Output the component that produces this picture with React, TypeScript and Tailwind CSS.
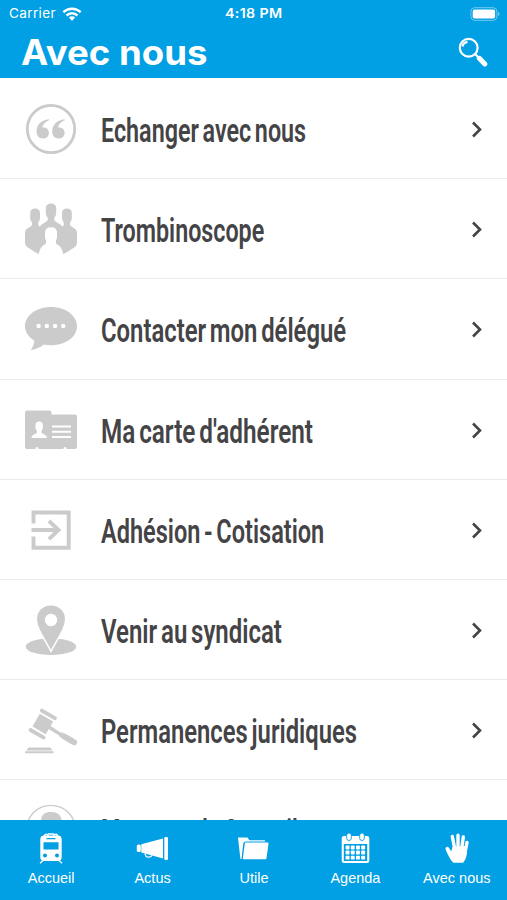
import { useLayoutEffect, useRef, useState, type ReactNode } from 'react';

type MenuItem = {
  label: string;
  width: number;
  icon: ReactNode;
};

type Tab = {
  label: string;
  icon: ReactNode;
};

// Condenses or widens a line of text so that it takes the given width
function FitText({ width, className, children }: { width: number; className?: string; children: string }) {
  const ref = useRef<HTMLSpanElement>(null);
  const [scale, setScale] = useState(1);

  useLayoutEffect(() => {
    if (ref.current) setScale(width / ref.current.offsetWidth);
  }, [width, children]);

  return (
    <span className="block" style={{ width }}>
      <span
        ref={ref}
        className={`inline-block origin-left whitespace-nowrap ${className ?? ''}`}
        style={{ transform: `scaleX(${scale})` }}
      >
        {children}
      </span>
    </span>
  );
}

function QuoteIcon() {
  return (
    <svg viewBox="0 0 52 52" className="size-[52px]" fill="currentColor">
      <circle cx="26" cy="26" r="23.700" fill="none" stroke="currentColor" strokeWidth="2.800" />
      <path d="M24 16.200C16 17 11.500 22 11.500 28.500c0 4.200 2.600 7 6.400 7 3.500 0 6-2.400 6-5.600s-2.300-5.400-5.200-5.400c-.7 0-1.200.1-1.500.2.700-3.400 3.200-6.200 6.800-7.500z" />
      <path d="M39.700 16.200C31.700 17 27.200 22 27.200 28.500c0 4.200 2.600 7 6.400 7 3.500 0 6-2.400 6-5.600s-2.300-5.400-5.200-5.400c-.7 0-1.200.1-1.500.2.700-3.400 3.200-6.200 6.800-7.500z" />
    </svg>
  );
}

function TeamIcon() {
  return (
    <svg viewBox="0 0 52 52" className="size-[52px]" fill="currentColor">
      <path d="M20.800 5c0-3 2-4.500 5.200-4.500S31.200 2 31.200 5v5c0 2-1.200 4-2 5v2c1 2.500 6 3 8.300 7L34 34H18l-3.500-10c2.300-4 7.300-4.500 8.300-7v-2c-.8-1-2-3-2-5z" />
      <path d="M5.200 10c0-3 1.800-4.500 4.900-4.500S15 7 15 10v5c0 2-1.200 3.500-1.800 4.500V22c.8 1.500 3.500 2 5.300 3l2.500 5v10.500c-3 2-6.300 4-7 10.500C10 49.500 7 47 3.500 45 1 43.500 0 42 0 39v-9.500C0 25 6 24.500 7 22v-2.500c-.6-1-1.800-2.500-1.800-4.500z" />
      <path d="M46.800 10c0-3-1.800-4.500-4.900-4.500S37 7 37 10v5c0 2 1.200 3.500 1.800 4.500V22c-.8 1.500-3.500 2-5.300 3L31 30v10.500c3 2 6.300 4 7 10.500 4-1.500 7-4 10.500-6 2.500-1.500 3.500-3 3.500-6v-9.500C52 25 46 24.500 45 22v-2.500c.6-1 1.800-2.500 1.800-4.500z" />
      <path
        d="M20 30c0-4 2-5.800 6-5.800s6 1.800 6 5.800v4c0 2-1 3.800-2.200 5v1.500C32.500 42.500 37 44 38 51.500H14c1-7.500 5.500-9 8.200-11V39c-1.200-1.200-2.200-3-2.200-5z"
        fill="white"
      />
    </svg>
  );
}

function BubbleIcon() {
  return (
    <svg viewBox="0 0 52 52" className="size-[52px]" fill="currentColor">
      <path d="M26 4C11.600 4 0 12.500 0 23.200c0 5.800 3.800 11 9.300 14.500-.3 3.500-1.600 6.500-3.500 9.500 5.200-1 9.700-2.800 13-5.700 2.300.4 4.700.7 7.200.7 14.400 0 26-8.300 26-19S40.400 4 26 4z" />
      <g fill="white">
        <circle cx="13.600" cy="23" r="2.200" />
        <circle cx="21.800" cy="23" r="2.200" />
        <circle cx="30" cy="23" r="2.200" />
        <circle cx="38.200" cy="23" r="2.200" />
      </g>
    </svg>
  );
}

function CardIcon() {
  return (
    <svg viewBox="0 0 52 52" className="size-[52px]" fill="currentColor">
      <path d="M2 6.500h22.500a2 2 0 0 1 2 2v2H50a2 2 0 0 1 2 2V43a2 2 0 0 1-2 2h-8.500c0-1.300-.6-2-1.500-2s-1.500.7-1.500 2h-25c0-1.300-.6-2-1.500-2s-1.500.7-1.500 2H2a2 2 0 0 1-2-2V8.500a2 2 0 0 1 2-2z" />
      <g fill="white">
        <path d="M10.500 21c0-2.200 1.400-3.500 3.700-3.500s3.700 1.300 3.700 3.500v2.500c0 1.500-.8 2.700-1.300 3.200v2c.8 1.500 5 1.500 5.600 5.300H6.400c.6-3.800 4.600-3.800 5.400-5.300v-2c-.5-.5-1.300-1.700-1.300-3.200z" />
        <path d="M27 21.500h19v2H27zM27 26.700h19v2H27zM27 31.900h19v2H27z" />
      </g>
    </svg>
  );
}

function EnterIcon() {
  return (
    <svg viewBox="0 0 52 52" className="size-[52px]" fill="none" stroke="currentColor" strokeWidth="3.900">
      <path d="M8.500 19.500V8.500h35.200v35.200H8.500V32.500" />
      <path d="M6.500 26h26M24 16.800l9.500 9.200-9.500 9.200" />
    </svg>
  );
}

function PlaceIcon() {
  return (
    <svg viewBox="0 0 52 52" className="size-[52px]" fill="currentColor">
      <ellipse cx="26" cy="42.700" rx="25.200" ry="8.300" />
      <path
        d="M26 .7c8.300 0 14.700 6.200 14.700 14.300 0 8.500-7 18-14.700 32.300C18.300 33 11.300 23.500 11.300 15 11.300 6.900 17.700.7 26 .7z"
        stroke="white"
        strokeWidth="1.500"
      />
      <circle cx="26" cy="16" r="6.200" fill="white" />
    </svg>
  );
}

function GavelIcon() {
  return (
    <svg viewBox="0 0 52 52" className="size-[52px]" fill="currentColor">
      <g transform="translate(17.800 20) rotate(30)">
        <rect x="-7.700" y="-7.300" width="15.400" height="14.600" />
        <rect x="-9.500" y="-13" width="19" height="3.800" rx="1.900" />
        <rect x="-9.500" y="9.400" width="19" height="3.800" rx="1.900" />
        <path d="M7-2.200 19-1.500c2-2 16-1.600 18.500-1.200 2.400.4 2.400 5.200 0 5.600-2.500.4-16.500.6-18.500-1.200L7 1.500z" />
      </g>
      <path d="M4.500 43.500h19.800c1.500 0 2.500 1.500 3.200 3H1.500c.6-1.500 1.500-3 3-3zM0 47.300h28.500v2H0z" />
    </svg>
  );
}

function ProfileIcon() {
  return (
    <svg viewBox="0 0 52 52" className="size-[52px]" fill="currentColor">
      <circle cx="26" cy="26" r="24.600" fill="none" stroke="currentColor" strokeWidth="1.400" />
      <path d="M16 17c0-6 4-9 10-9s10.500 3 10.500 9v6c0 5-4.500 10-10.500 10s-10-5-10-10z" />
    </svg>
  );
}

const items: MenuItem[] = [
  { label: 'Echanger avec nous', width: 205, icon: <QuoteIcon /> },
  { label: 'Trombinoscope', width: 163, icon: <TeamIcon /> },
  { label: 'Contacter mon délégué', width: 245, icon: <BubbleIcon /> },
  { label: "Ma carte d'adhérent", width: 212, icon: <CardIcon /> },
  { label: 'Adhésion - Cotisation', width: 223, icon: <EnterIcon /> },
  { label: 'Venir au syndicat', width: 181, icon: <PlaceIcon /> },
  { label: 'Permanences juridiques', width: 256, icon: <GavelIcon /> },
  { label: 'Message du Conseil', width: 197, icon: <ProfileIcon /> },
];

const tabs: Tab[] = [
  {
    label: 'Accueil',
    icon: (
      <svg viewBox="0 0 34 34" className="size-[34px]" fill="white">
        <path d="M10.500 5c0-2.400 3.500-2.400 3.500 0M20 5c0-2.400 3.500-2.400 3.500 0M14 3h6" stroke="white" strokeWidth="1.500" fill="none" />
        <path
          fillRule="evenodd"
          d="M10 4.500h14c2.500 0 3.700 1.500 3.700 4V26c0 2.500-1.200 4-3.700 4H10c-2.500 0-3.700-1.500-3.700-4V8.500c0-2.500 1.200-4 3.700-4zM12.500 7v1.200h9V7zM9.500 11.300v7.200h15v-7.200zM11 22.500a2 2 0 1 0 0 4 2 2 0 0 0 0-4zM23 22.500a2 2 0 1 0 0 4 2 2 0 0 0 0-4z"
        />
        <path d="M9.500 29 6 32.300M24.500 29l3.500 3.300" stroke="white" strokeWidth="1.400" />
      </svg>
    ),
  },
  {
    label: 'Actus',
    icon: (
      <svg viewBox="0 0 34 34" className="size-[34px]" fill="white">
        <rect x="1.800" y="13.500" width="4" height="7.500" rx="1.500" />
        <path d="M6.300 13.200 28 7.500v20L6.300 21.500z" />
        <rect x="29.300" y="6" width="3.700" height="23" rx="1.300" />
        <path d="M10 22.500c.3 2.500 1.500 3.700 3.500 3.700s3-.8 3.500-2" fill="none" stroke="white" strokeWidth="1.300" />
      </svg>
    ),
  },
  {
    label: 'Utile',
    icon: (
      <svg viewBox="0 0 34 34" className="size-[34px]" fill="white">
        <path d="M2 6.500h9.500l1.800 2.800h14.900c.7 0 1 .4 1 1.100H10.300c-2 0-2.900.8-3.100 2.600L5.500 28H4.400z" />
        <path d="M10.300 11.500h20.900c1 0 1.400.5 1.300 1.400l-2 14.200c-.1.900-.6 1.200-1.400 1.200H8c-.8 0-1.200-.4-1.100-1.300l1.900-14.200c.1-.9.600-1.300 1.500-1.300z" />
      </svg>
    ),
  },
  {
    label: 'Agenda',
    icon: (
      <svg viewBox="0 0 34 34" className="size-[34px]" fill="white">
        <path
          fillRule="evenodd"
          d="M6 5h23a2.300 2.300 0 0 1 2.300 2.300v22.400a2.300 2.300 0 0 1-2.300 2.300H6a2.300 2.300 0 0 1-2.300-2.300V7.300A2.300 2.300 0 0 1 6 5zM5.800 13v16c0 .7.400 1 1 1h21.400c.6 0 1-.3 1-1V13z"
        />
        <rect x="8.700" y="2" width="4.600" height="7.500" rx="2.300" stroke="#019fe3" strokeWidth=".9" />
        <rect x="21.700" y="2" width="4.600" height="7.500" rx="2.300" stroke="#019fe3" strokeWidth=".9" />
        {[14.5, 19.6, 24.7].map((y) =>
          [7.6, 12.8, 18, 23.2].map((x) => <rect key={`${x}-${y}`} x={x} y={y} width="3.900" height="3.900" rx=".7" />)
        )}
      </svg>
    ),
  },
  {
    label: 'Avec nous',
    icon: (
      <svg viewBox="0 0 34 34" className="size-[34px]" fill="white">
        <path d="M14.500 31.800h9.500c1.500-1.500 3.500-5 4-9.800l-1-7-13.500 1-1.500 5-5.500-3.500c1.500 5 4.500 11 8 14.300z" />
        <g fill="none" stroke="white" strokeWidth="3.400" strokeLinecap="round">
          <path d="M8.300 17.500 13 25M13.300 5.500 15.800 18M19 4.200v14M24.300 6 22.500 19M28 11.500 26 22" />
        </g>
      </svg>
    ),
  },
];

export default function App() {
  return (
    <div className="flex h-[900px] w-[507px] flex-col overflow-hidden bg-white font-['Liberation_Sans',sans-serif]">
      {/* Header */}
      <header className="h-[78px] shrink-0 bg-[#019fe3] text-white">
        <div className="grid h-7 grid-cols-3 items-center pr-2 pl-[9px] font-['Inter',sans-serif] text-[13px]">
          <div className="flex items-center gap-1.5">
            <FitText width={47} className="tracking-wide">Carrier</FitText>
            <svg viewBox="0 0 20 14" className="h-3.5 w-5" fill="none" stroke="white" strokeWidth="2.400">
              <path d="M1.300 5.200c5-4.700 12.400-4.700 17.400 0M4.500 8.500c3.200-3 7.800-3 11 0" />
              <path d="M6.800 10.600c2-1.700 4.400-1.700 6.400 0L10 13.700z" fill="white" stroke="none" />
            </svg>
          </div>
          <div className="flex justify-center font-semibold">
            <FitText width={58} className="tracking-wide">4:18 PM</FitText>
          </div>
          <svg viewBox="0 0 31 14" className="h-3.5 w-[31px] translate-x-0.5 justify-self-end">
            <rect x=".9" y=".7" width="26" height="12.600" rx="3.800" fill="none" stroke="white" strokeOpacity=".45" />
            <rect x="2.700" y="2.500" width="22.400" height="9" rx="2" fill="white" />
            <path d="M28.200 4.800c1.600.6 1.600 3.800 0 4.400z" fill="white" fillOpacity=".5" />
          </svg>
        </div>
        <div className="flex h-12 items-center justify-between pr-[19px] pl-[21px]">
          <h1 className="font-['Inter',sans-serif] text-[35px] leading-none font-bold">
            <FitText width={187}>Avec nous</FitText>
          </h1>
          <svg viewBox="0 0 30 30" className="size-[30px]" fill="none" stroke="white">
            <circle cx="10.700" cy="10.700" r="8.900" strokeWidth="2.200" />
            <path d="M4.500 9.500c.5-2.600 2.300-4.300 5-4.700" strokeWidth="2.200" />
            <path d="m17.300 17.300 3.500 3.500" strokeWidth="2.200" />
            <path d="m21.300 21.300 5.500 5.600" strokeWidth="5" strokeLinecap="round" />
          </svg>
        </div>
      </header>

      {/* Menu */}
      <main className="min-h-0 flex-1 overflow-hidden pt-px">
        {items.map((item) => (
          <button
            key={item.label}
            className="flex h-[100.2px] w-full items-center border-b border-[#ebebeb] pt-px pr-6 pl-[25px] text-left"
          >
            <span className="shrink-0 text-[#cbcbcb]">{item.icon}</span>
            <span className="ml-6 flex-1 pt-1 font-['Roboto',sans-serif] text-[33px] leading-10 font-semibold text-[#444346]">
              <FitText width={item.width} className="[word-spacing:-3px]">{item.label}</FitText>
            </span>
            <svg viewBox="0 0 12 18" className="h-[18px] w-3" fill="none" stroke="#444346" strokeWidth="2.600">
              <path d="m2 2.500 7 7-7 7" />
            </svg>
          </button>
        ))}
      </main>

      {/* Tab bar */}
      <nav className="grid h-[80.500px] shrink-0 grid-cols-5 bg-[#019fe3] text-white">
        {tabs.map((tab) => (
          <button key={tab.label} className="flex flex-col items-center pt-[11px]">
            {tab.icon}
            <span className="mt-[3px] pl-px text-[14.500px] leading-5 whitespace-nowrap">{tab.label}</span>
          </button>
        ))}
      </nav>
    </div>
  );
}
